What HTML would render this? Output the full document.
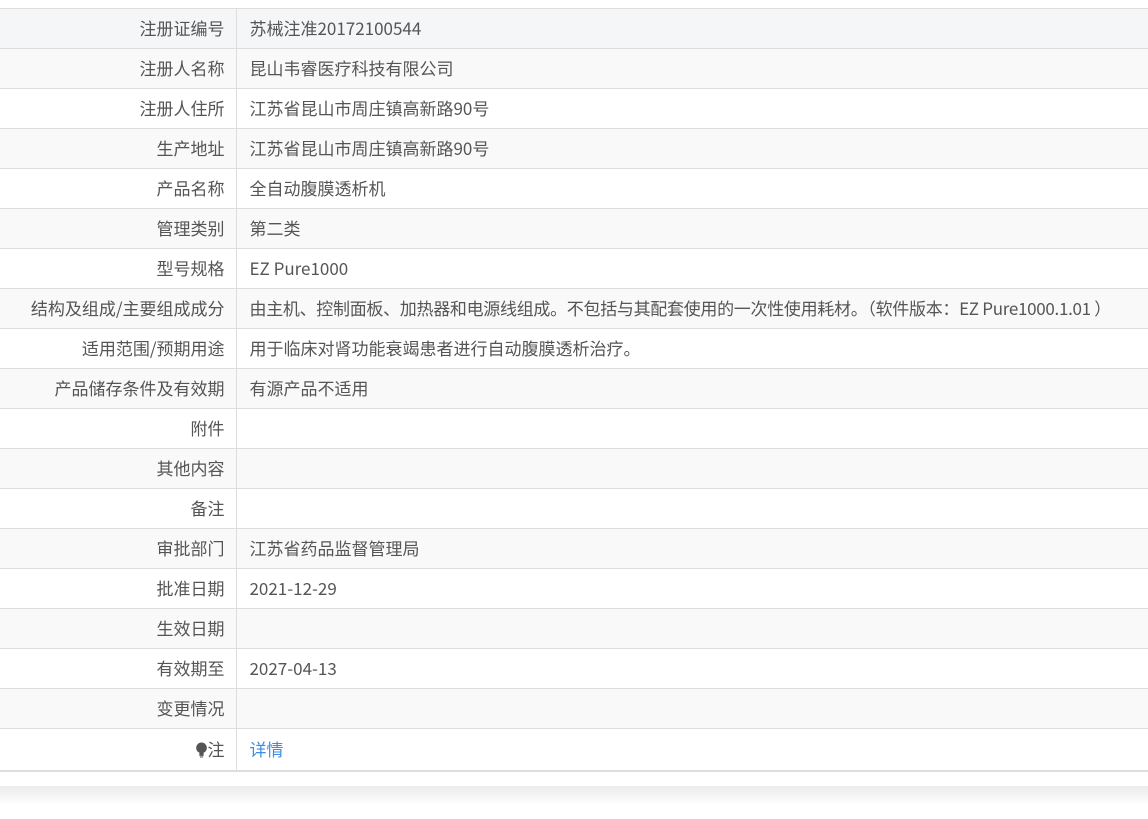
<!DOCTYPE html>
<html><head><meta charset="utf-8"><style>
body{margin:0;background:#fff;font-family:"Noto Sans CJK SC","Liberation Sans",sans-serif;font-size:17px;color:#555;}
.wrap{position:absolute;top:8px;left:0;width:1148px;}
table{border-collapse:collapse;width:1148px;border-top:1px solid #ddd;}
td{height:39px;border-bottom:1px solid #ddd;padding:0;line-height:37px;padding-bottom:2px;box-sizing:border-box;white-space:nowrap;}
td.l{width:236px;text-align:right;padding-right:11px;border-right:1px solid #ddd;}
td.r{padding-left:13px;}
tr:nth-child(even){background:#f9f9f9;}
tr.h{background:#f5f6f8;}
tr.last td{height:42px;border-bottom:2px solid #ddd;}
a{color:#3a8ee6;text-decoration:none;}
.n{letter-spacing:-0.3px;}
.sh{position:absolute;top:786px;left:0;width:1148px;height:20px;background:linear-gradient(#ececec,#fff);}
</style></head><body>
<div class="wrap"><table>
<tr class="h"><td class="l">注册证编号</td><td class="r">苏械注准20172100544</td></tr>
<tr><td class="l">注册人名称</td><td class="r">昆山韦睿医疗科技有限公司</td></tr>
<tr><td class="l">注册人住所</td><td class="r">江苏省昆山市周庄镇高新路90号</td></tr>
<tr><td class="l">生产地址</td><td class="r">江苏省昆山市周庄镇高新路90号</td></tr>
<tr><td class="l">产品名称</td><td class="r">全自动腹膜透析机</td></tr>
<tr><td class="l">管理类别</td><td class="r">第二类</td></tr>
<tr><td class="l">型号规格</td><td class="r">EZ Pure1000</td></tr>
<tr><td class="l">结构及组成/主要组成成分</td><td class="r n">由主机、控制面板、加热器和电源线组成。不包括与其配套使用的一次性使用耗材。（软件版本：EZ Pure1000.1.01 ）</td></tr>
<tr><td class="l">适用范围/预期用途</td><td class="r">用于临床对肾功能衰竭患者进行自动腹膜透析治疗。</td></tr>
<tr><td class="l">产品储存条件及有效期</td><td class="r">有源产品不适用</td></tr>
<tr><td class="l">附件</td><td class="r"></td></tr>
<tr><td class="l">其他内容</td><td class="r"></td></tr>
<tr><td class="l">备注</td><td class="r"></td></tr>
<tr><td class="l">审批部门</td><td class="r">江苏省药品监督管理局</td></tr>
<tr><td class="l">批准日期</td><td class="r">2021-12-29</td></tr>
<tr><td class="l">生效日期</td><td class="r"></td></tr>
<tr><td class="l">有效期至</td><td class="r">2027-04-13</td></tr>
<tr><td class="l">变更情况</td><td class="r"></td></tr>
<tr class="last" style="background:#fff"><td class="l"><svg width="13" height="16" viewBox="0 0 12 15" style="vertical-align:-2px"><circle cx="6" cy="5.5" r="5" fill="#555"/><rect x="4" y="10" width="4" height="3" fill="#555"/><rect x="4.5" y="13.5" width="3" height="1" fill="#555"/></svg>注</td><td class="r"><a>详情</a></td></tr>
</table></div>
<div class="sh"></div>
</body></html>
